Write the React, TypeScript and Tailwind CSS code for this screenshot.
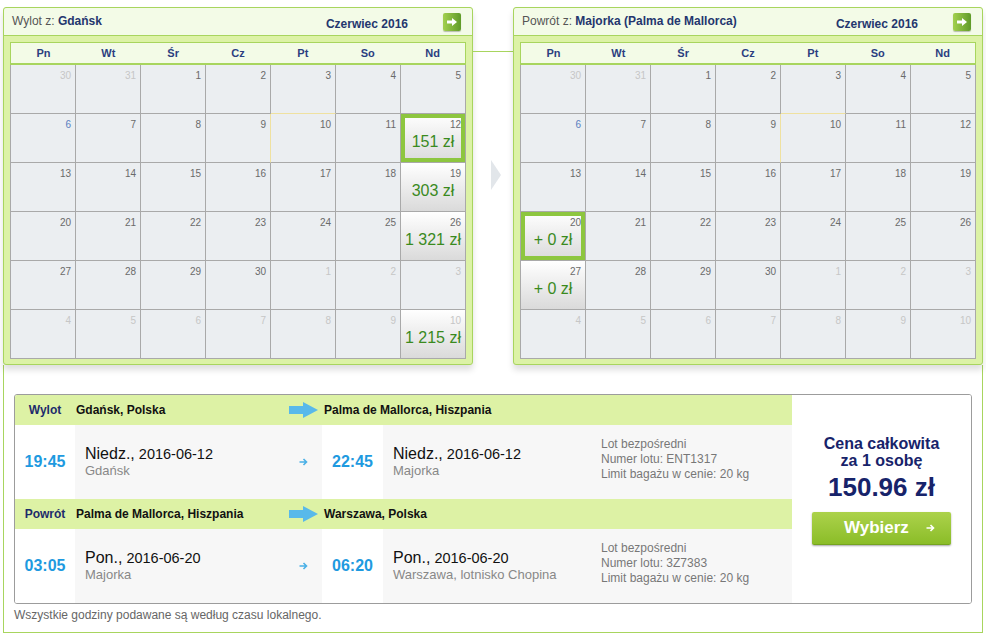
import React from "react";

type PriceMap = Record<number, { price: string; sel?: boolean }>;

const WEEKDAYS = ["Pn", "Wt", "Śr", "Cz", "Pt", "So", "Nd"];

// June 2016 shown Monday-first: 30, 31 of May, 1..30 June, 1..10 July
const DAYS: number[] = [30, 31, ...Array.from({ length: 30 }, (_, i) => i + 1), ...Array.from({ length: 10 }, (_, i) => i + 1)];

function HeaderArrow() {
  return (
    <div className="ml-[35px] w-[18px] h-[18px] rounded-[2px] bg-gradient-to-r from-[#a3d04f] to-[#5f9b28] flex items-center justify-center shadow-[0_1px_1px_rgba(0,0,0,0.25)]">
      <svg width="12" height="10" viewBox="0 0 12 10">
        <path d="M1 3.5h5V1l5 4-5 4V6.5H1z" fill="#fff" />
      </svg>
    </div>
  );
}

function DayCell({ idx, prices }: { idx: number; prices: PriceMap }) {
  const d = DAYS[idx];
  const out = idx < 2 || idx >= 32;
  const p = prices[idx];
  const rightYellow = idx === 10;
  const bottomYellow = idx === 4;
  const numColor = out ? "text-[#c6c6c6]" : idx === 7 ? "text-[#5a7fbf]" : "text-[#6a6a6a]";
  return (
    <div
      className={[
        "h-[49px] border-r border-b flex flex-col",
        rightYellow ? "border-r-[#efe1a0]" : "border-r-[#a9a9a9]",
        bottomYellow ? "border-b-[#efe1a0]" : "border-b-[#a9a9a9]",
        p ? "bg-gradient-to-b from-white to-[#dadada] cursor-pointer" : "bg-[#ebeef1]",
        p && p.sel ? "shadow-[inset_0_0_0_4px_#8dc63f]" : "",
      ].join(" ")}
    >
      <div className={`text-[10px] leading-[12px] text-right pr-[4px] pt-[5px] ${numColor}`}>{d}</div>
      {p && <div className="text-[16px] leading-[20px] text-center text-[#3a8a1e] mt-[1px]">{p.price}</div>}
    </div>
  );
}

function Calendar({ label, city, prices }: { label: string; city: string; prices: PriceMap }) {
  return (
    <div className="w-[470px] h-[358px] border border-[#a8d55e] rounded-[3px] bg-[#dcf2a6] shadow-[0_5px_6px_rgba(0,0,0,0.13)] flex flex-col">
      <div className="h-[28px] shrink-0 border-b border-[#a8d55e] bg-[#f3fbe7] rounded-t-[3px] flex items-center pl-[8px] pr-[11px]">
        <div className="text-[12px] leading-[14px] -mt-[1px] whitespace-nowrap">
          <span className="text-[#555]">{label} </span>
          <span className="font-bold text-[#24366e]">{city}</span>
        </div>
        <div className="ml-auto text-[12px] leading-[14px] font-bold text-[#24366e] mt-[4px]">Czerwiec 2016</div>
        <HeaderArrow />
      </div>
      <div className="flex-1 pl-[6px] pt-[6px]">
        <div className="w-[456px] h-[23px] border border-[#a8d55e] border-b-2 bg-[#f3fbe7] grid grid-cols-7 items-center">
          {WEEKDAYS.map((w) => (
            <div key={w} className="text-center text-[11px] font-bold text-[#2b3e80]">
              {w}
            </div>
          ))}
        </div>
        <div className="w-[456px] grid grid-cols-[repeat(7,65px)] border-l border-[#a9a9a9]">
          {DAYS.map((_, i) => (
            <DayCell key={i} idx={i} prices={prices} />
          ))}
        </div>
      </div>
    </div>
  );
}

function BigArrow() {
  return (
    <svg width="29" height="16" viewBox="0 0 29 16" className="shrink-0">
      <path d="M0 4h14V0l15 8-15 8v-4H0z" fill="#58b9ea" />
    </svg>
  );
}

function SmallArrow({ color }: { color: string }) {
  return (
    <svg width="9" height="8" viewBox="0 0 9 8" className="shrink-0">
      <path d="M0.5 4h7M4.5 1l3 3-3 3" stroke={color} strokeWidth="1.6" fill="none" />
    </svg>
  );
}

function LegHeader({ label, from, to }: { label: string; from: string; to: string }) {
  return (
    <div className="h-[30px] bg-[#ddf2a5] grid grid-cols-[60px_247px_1fr] items-center text-[12px] font-bold">
      <div className="text-center text-[#1d2b6b]">{label}</div>
      <div className="flex items-center pl-[1px] pr-[4px] text-[#111]">
        <span>{from}</span>
        <span className="ml-auto">
          <BigArrow />
        </span>
      </div>
      <div className="pl-[2px] text-[#111]">{to}</div>
    </div>
  );
}

function DateBlock({ day, date, place }: { day: string; date: string; place: string }) {
  return (
    <div>
      <div className="leading-[18px] text-[#111]">
        <span className="text-[16px]">{day}</span>
        <span className="text-[14.5px]"> {date}</span>
      </div>
      <div className="text-[13px] leading-[16px] text-[#888]">{place}</div>
    </div>
  );
}

function LegRow(props: {
  dep: string;
  arr: string;
  day: string;
  date: string;
  fromPlace: string;
  toPlace: string;
  flight: string;
}) {
  return (
    <div className="h-[74px] grid grid-cols-[60px_247px_61px_1fr]">
      <div className="bg-white flex items-center justify-center text-[16px] font-bold text-[#1e9ae0]">{props.dep}</div>
      <div className="bg-[#f7f7f7] flex items-center pl-[10px] pr-[14px]">
        <DateBlock day={props.day} date={props.date} place={props.fromPlace} />
        <span className="ml-auto">
          <SmallArrow color="#4ab0e6" />
        </span>
      </div>
      <div className="bg-white flex items-center justify-center text-[16px] font-bold text-[#1e9ae0]">{props.arr}</div>
      <div className="bg-[#f7f7f7] flex items-center pl-[10px]">
        <div className="w-[208px]">
          <DateBlock day={props.day} date={props.date} place={props.toPlace} />
        </div>
        <div className="text-[12px] leading-[15px] text-[#777] -mt-[6px]">
          <div>Lot bezpośredni</div>
          <div>Numer lotu: {props.flight}</div>
          <div>Limit bagażu w cenie: 20 kg</div>
        </div>
      </div>
    </div>
  );
}

export default function App() {
  const outbound: PriceMap = {
    13: { price: "151 zł", sel: true },
    20: { price: "303 zł" },
    27: { price: "1 321 zł" },
    41: { price: "1 215 zł" },
  };
  const inbound: PriceMap = {
    21: { price: "+ 0 zł", sel: true },
    28: { price: "+ 0 zł" },
  };

  return (
    <div className="w-[986px] h-[637px] bg-white font-['Liberation_Sans',Arial,sans-serif] pt-[7px] pl-[3px]">
      <div className="w-[980px]">
        <div className="relative z-10 flex">
          <Calendar label="Wylot z:" city="Gdańsk" prices={outbound} />
          <div className="w-[40px] flex flex-col">
            <div className="mt-[44px] h-px bg-[#a8d55e]" />
            <div className="ml-[18px] mt-[108px] w-0 h-0 border-y-[15px] border-y-transparent border-l-[10px] border-l-[#e2e6ea]" />
          </div>
          <Calendar label="Powrót z:" city="Majorka (Palma de Mallorca)" prices={inbound} />
        </div>

        <div className="border-x border-b border-[#a8d55e] px-[10px] pt-[29px] pb-[9px]">
          <div className="h-[210px] border border-[#9c9c9c] rounded-[3px] overflow-hidden flex">
            <div className="w-[777px]">
              <LegHeader label="Wylot" from="Gdańsk, Polska" to="Palma de Mallorca, Hiszpania" />
              <LegRow
                dep="19:45"
                arr="22:45"
                day="Niedz.,"
                date="2016-06-12"
                fromPlace="Gdańsk"
                toPlace="Majorka"
                flight="ENT1317"
              />
              <LegHeader label="Powrót" from="Palma de Mallorca, Hiszpania" to="Warszawa, Polska" />
              <LegRow
                dep="03:05"
                arr="06:20"
                day="Pon.,"
                date="2016-06-20"
                fromPlace="Majorka"
                toPlace="Warszawa, lotnisko Chopina"
                flight="3Z7383"
              />
            </div>
            <div className="flex-1 bg-white flex flex-col items-center pt-[40px]">
              <div className="text-[16px] leading-[17px] font-bold text-[#17236a] text-center">
                Cena całkowita
                <br />
                za 1 osobę
              </div>
              <div className="mt-[3px] text-[26px] leading-[30px] font-bold text-[#17236a]">150.96 zł</div>
              <button className="mt-[10px] w-[139px] h-[33px] rounded-[2px] bg-gradient-to-b from-[#acd24a] to-[#8bbd27] border-b border-[#75a41f] shadow-[0_1px_2px_rgba(0,0,0,0.35)] flex items-center pl-[32px] gap-[17px]">
                <span className="text-[17px] font-bold text-white">Wybierz</span>
                <SmallArrow color="#ffffff" />
              </button>
            </div>
          </div>
          <div className="mt-[4px] h-[15px] text-[12px] leading-[15px] text-[#666]">
            Wszystkie godziny podawane są według czasu lokalnego.
          </div>
        </div>
      </div>
    </div>
  );
}
